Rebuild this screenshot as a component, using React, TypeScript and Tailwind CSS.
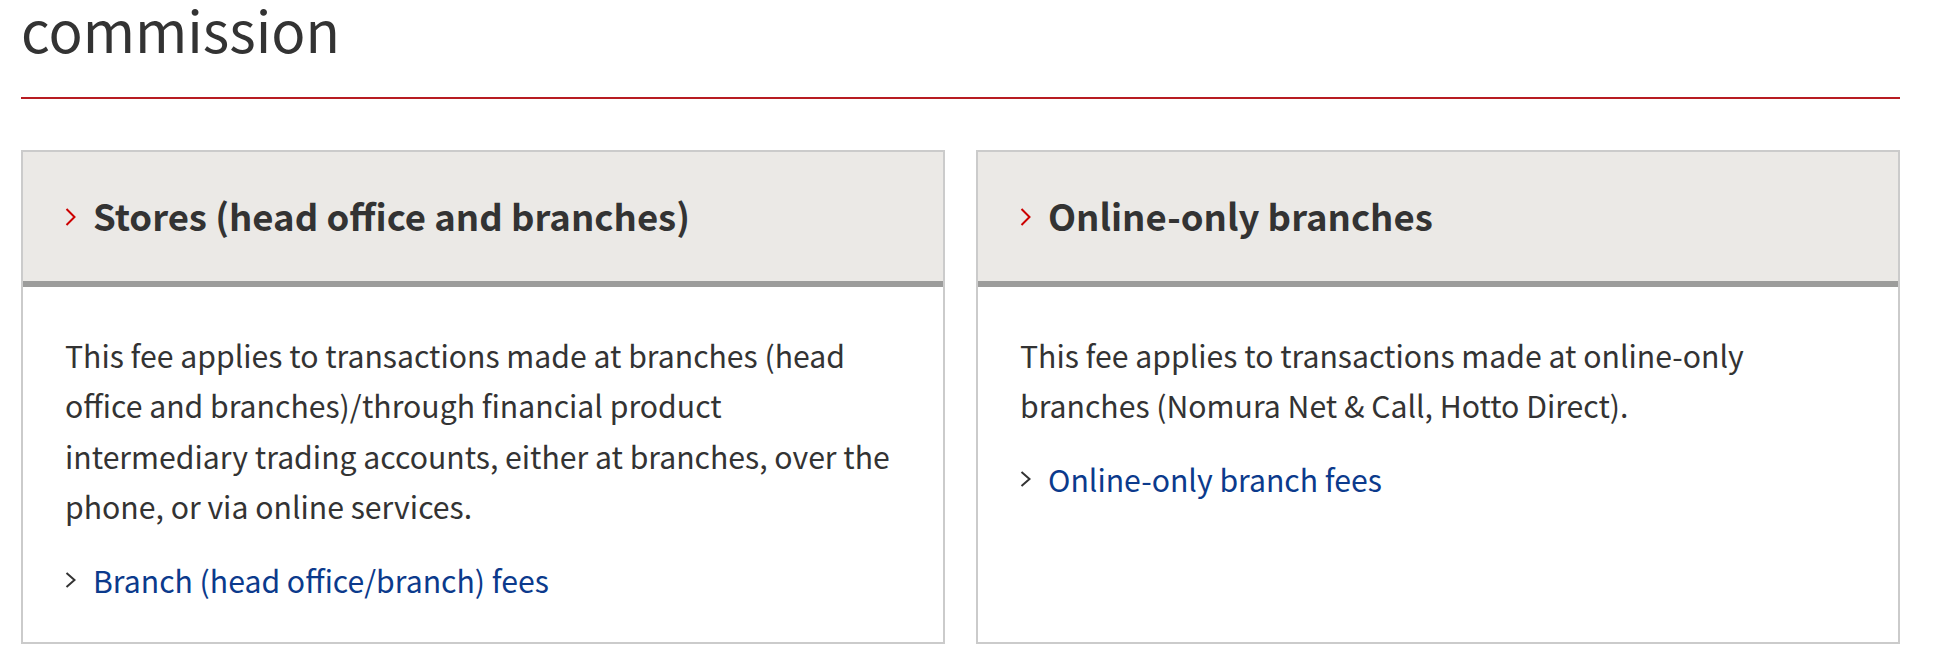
import React from "react";

interface FeeCard {
  title: string;
  body: string;
  link: string;
}

const cards: FeeCard[] = [
  {
    title: "Stores (head office and branches)",
    body: "This fee applies to transactions made at branches (head office and branches)/through financial product intermediary trading accounts, either at branches, over the phone, or via online services.",
    link: "Branch (head office/branch) fees",
  },
  {
    title: "Online-only branches",
    body: "This fee applies to transactions made at online-only branches (Nomura Net & Call, Hotto Direct).",
    link: "Online-only branch fees",
  },
];

const Chevron: React.FC<{ className?: string; h: number }> = ({ className, h }) => (
  <svg viewBox={`0 0 11 ${h}`} fill="none" stroke="currentColor" strokeWidth="2" className={className}>
    <polyline points={`1.5,1 9.5,${h / 2} 1.5,${h - 1}`} />
  </svg>
);

const App: React.FC = () => {
  return (
    <div className="h-[670px] w-[1938px] overflow-hidden bg-white font-['Noto_Sans_CJK_JP','Noto_Sans',sans-serif] text-[#333]">
      <div className="pl-[21px] pr-[38px]">
        <h1 className="border-b-2 border-[#b81c22] pb-[40px] text-[56.5px] font-normal leading-[57px]">
          commission
        </h1>

        <div className="mt-[51px] grid grid-cols-2 gap-[31px]">
          {cards.map((card) => (
            <div key={card.title} className="flex flex-col border-2 border-[#cbcbcb] bg-white">
              <div className="flex h-[129px] items-center bg-[#ebe9e6] px-[42px]">
                <Chevron h={18} className="mr-[17px] h-[18px] w-[11px] shrink-0 text-[#cc0000]" />
                <h2 className="text-[36.5px] font-bold leading-none">{card.title}</h2>
              </div>
              <div className="h-[6px] bg-[#9c9c9b]" />
              <div className="px-[42px] pb-[37px] pt-[43px] text-[30.2px] leading-[50.4px]">
                <p>{card.body}</p>
                <a href="#" className="mt-[23px] flex items-center text-[#0b3a8c]">
                  <Chevron h={16} className="mr-[17px] h-[16px] w-[11px] shrink-0 text-[#333]" />
                  <span>{card.link}</span>
                </a>
              </div>
            </div>
          ))}
        </div>
      </div>
    </div>
  );
};

export default App;
